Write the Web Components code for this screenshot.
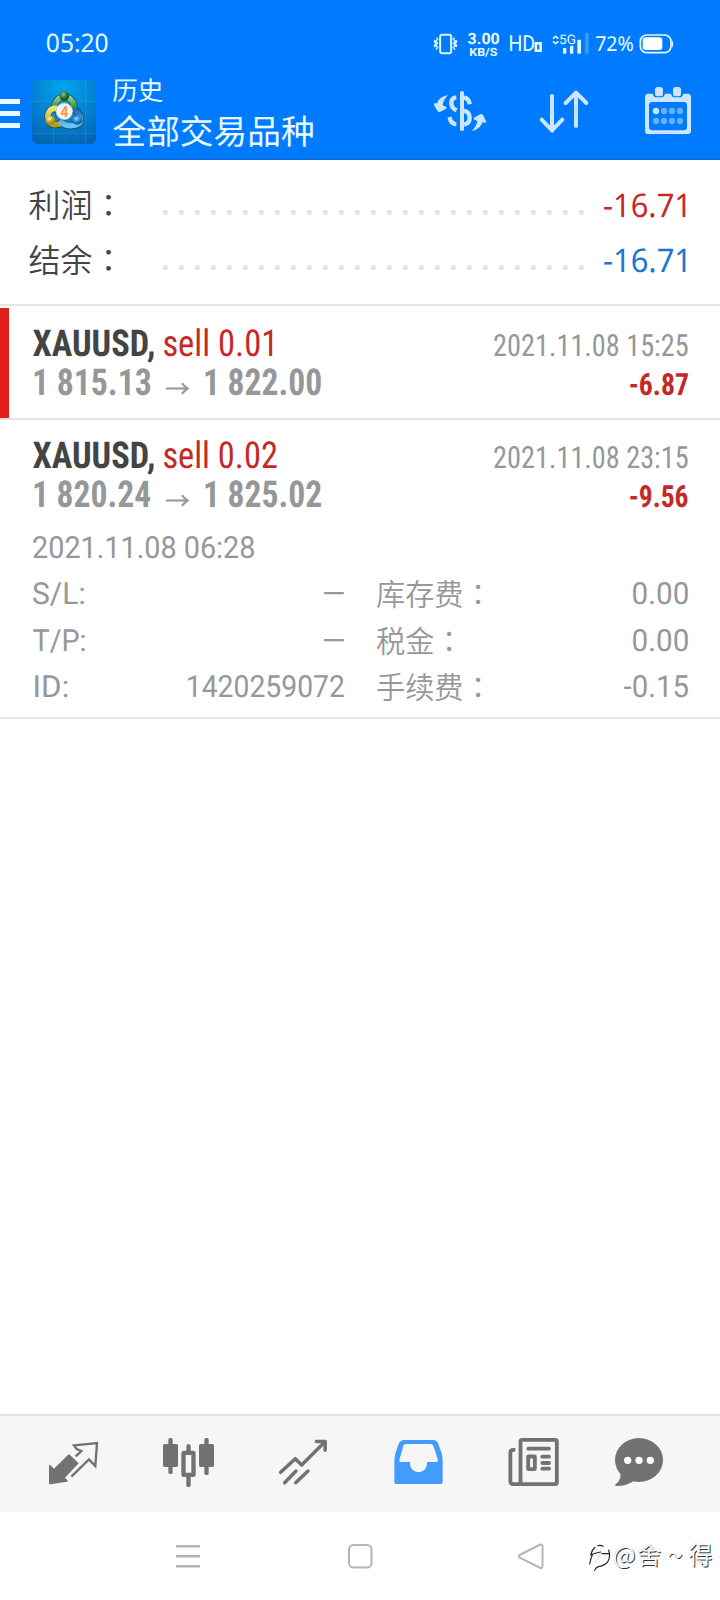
<!DOCTYPE html>
<html lang="zh-CN">
<head>
<meta charset="utf-8">
<title>历史</title>
<style>
html,body{margin:0;padding:0;background:#fff}
body{width:720px;height:1600px;overflow:hidden;font-family:Roboto,"Noto Sans CJK SC",sans-serif}
</style>
</head>
<body>
<history-app></history-app>
<script>
// Base class: renders the class's static markup into an open shadow root.
class Base extends HTMLElement{
  constructor(){super();this.attachShadow({mode:'open'});}
  connectedCallback(){const t=document.createElement('template');t.innerHTML=this.view();this.shadowRoot.replaceChildren(t.content.cloneNode(true));}
  attr(n,d=''){return this.getAttribute(n)??d;}
}

// One line of text whose inked width is exactly `w` pixels.
customElements.define('fit-text',class extends Base{
  view(){
    const f=this.attr('font','Roboto'),s=this.attr('size'),w=this.attr('w'),wt=this.attr('weight','400'),top=this.attr('top','0');
    return `<style>:host{display:block;flex:none;width:${w}px;height:${s}px;margin-top:${top}px;white-space:nowrap;font-size:0;line-height:0}
    span{display:block;width:max-content;text-rendering:geometricPrecision;transform-origin:0 0;font:${wt} ${s}px/${s}px ${this.stack(f)};${this.hasAttribute('cond')?'font-stretch:75%;':''}}</style><span><slot></slot></span>`;
  }
  stack(f){return `"${f}","Noto Sans CJK SC",sans-serif`;}
  connectedCallback(){
    super.connectedCallback();
    // Measured at ten times the size, so that the ink bounds are not rounded.
    const c=document.createElement('canvas').getContext('2d');
    c.font=`${this.attr('weight','400')} ${this.attr('size')*10}px ${this.stack(this.attr('font','Roboto'))}`;
    if(this.hasAttribute('cond'))c.fontStretch='condensed';
    const m=c.measureText(this.textContent),l=m.actualBoundingBoxLeft/10,k=this.attr('w')/(l+m.actualBoundingBoxRight/10);
    this.shadowRoot.querySelector('span').style.transform=`translate(${l*k}px,1px) scaleX(${k})`;
  }
});

customElements.define('status-bar',class extends Base{view(){return `<style>
:host{display:flex;align-items:flex-start;height:70px;color:#e9faff}
svg{display:block;flex:none}.time{margin-left:47px}.net{margin:0 0 0 9.500px;width:32px}
.net>:last-child{margin-left:2px}.hd{margin-left:10.500px}</style>
<fit-text class="time" w="60.500" size="25.500" font="Noto Sans" top="30">05:20</fit-text>
<svg style="margin:33px 0 0 325.500px" width="25" height="22" viewBox="99 39 75 66" fill="none" stroke="#dff6ff"><rect x="120.500" y="44" width="33" height="56" rx="6" stroke-width="6"/><path d="M110 53l3 5-6 6 6 6-6 6 6 6-5 7M105 60l-2 4 4 6-4 7 3 4M163 53l-3 5 6 6-6 6 6 6-6 6 5 7M168 60l2 4-4 6 4 7-3 4" stroke-width="4"/></svg>
<div class="net"><fit-text w="31" size="15.500" weight="700" top="31.300">3.00</fit-text><fit-text w="27" size="11.300" weight="700" top="-.800">KB/S</fit-text></div>
<fit-text class="hd" w="24" size="22" weight="400" top="33.200">HD</fit-text>
<svg width="9" height="12" viewBox="0 0 9 12" style="margin-top:41px"><rect x="1.800" y="2.300" width="4.800" height="7.400" fill="none" stroke="#e9faff" stroke-width="2.600"/></svg>
<svg width="7" height="12" viewBox="454 41 21 36" style="margin:34px 0 0 8.500px" fill="none" stroke="#dff6ff" stroke-width="5"><path d="M457 55l8-7 8 7M457 63l8 7 8-7"/></svg>
<div style="width:36px;margin-left:1px"><fit-text w="15" size="13.200" top="33.300">5G</fit-text>
<svg width="31" height="23" viewBox="490 57 93 69" style="margin:-8px 0 0 2.500px;transform:translateY(-7px)"><g fill="#e9faff"><rect x="493" y="108" width="10" height="17" rx="3"/><rect x="514" y="101" width="10" height="24" rx="3"/><rect x="536" y="83" width="11" height="42" rx="3"/></g><rect x="559" y="62" width="11" height="63" rx="3" fill="#3a99ff"/></svg></div>
<fit-text w="37" size="20.500" font="Noto Sans" top="32.500">72%</fit-text>
<svg width="35" height="20" viewBox="719 43 105 60" style="margin:34px 0 0 6px"><rect x="723" y="46" width="92" height="53" rx="19" fill="none" stroke="#e9faff" stroke-width="5"/><rect x="730" y="53" width="59" height="38" rx="9" fill="#fff"/><path d="M818 61q7 12 0 24z" fill="#e9faff"/></svg>`;}});

customElements.define('app-header',class extends Base{view(){return `<style>
:host{display:flex;align-items:flex-start;color:#e9faff;border-bottom:1.500px solid #0b67d2;box-sizing:border-box;height:90px}
svg{display:block;flex:none}.t{flex:1;margin-left:17px}.acts{display:flex;gap:44px;margin-right:22px}</style>
<svg width="20" height="89" viewBox="0 0 20 89" fill="#e9faff"><path d="M0 29h20v5H0zM0 41h20v5H0zM0 53h20v5H0z"/></svg>
<svg style="margin:10px 0 0 12px" width="64" height="64" viewBox="21 15 192 192">
<defs><radialGradient id="b" cx=".5" cy=".1" r=".95"><stop offset="0" stop-color="#02a6ec"/><stop offset=".5" stop-color="#0483d2"/><stop offset="1" stop-color="#0464b0"/></radialGradient>
<linearGradient id="g" x2="0" y2="1"><stop stop-color="#8fd08c"/><stop offset="1" stop-color="#1d7f33"/></linearGradient>
<linearGradient id="y" x2="0" y2="1"><stop stop-color="#e9e676"/><stop offset="1" stop-color="#b29c1c"/></linearGradient>
<linearGradient id="l" x2="0" y2="1"><stop stop-color="#1f70bd"/><stop offset="1" stop-color="#6cc5f5"/></linearGradient>
<radialGradient id="gb" cx=".4" cy=".3"><stop stop-color="#86c97c"/><stop offset="1" stop-color="#0d5c22"/></radialGradient>
<radialGradient id="yb" cx=".4" cy=".3"><stop stop-color="#fff49a"/><stop offset="1" stop-color="#a98d10"/></radialGradient>
<radialGradient id="lb" cx=".4" cy=".3"><stop stop-color="#8fd7fb"/><stop offset="1" stop-color="#176ab8"/></radialGradient></defs>
<rect x="21" y="15" width="192" height="192" rx="17" fill="url(#b)"/>
<path d="M86 15v192M182 15v192M21 79h192M21 175h192" stroke="#37b4e6" stroke-opacity=".5" stroke-width="2"/>
<path d="M54 15v192M118 15v192M150 15v192M21 47h192M21 111h192M21 143h192" stroke="#37b4e6" stroke-opacity=".16" stroke-width="2"/>
<g fill="none" stroke-linecap="round"><g stroke="#0d4a55" stroke-width="21"><path d="M94 106Q84 98 91 84Q101 66 118 66Q135 66 145 84Q150 96 142 106"/><path d="M101 148Q80 152 73 140Q63 124 74 108Q82 98 98 101"/><path d="M109 142Q122 153 138 152Q165 151 166 136Q167 119 153 107"/></g>
<path d="M94 106Q84 98 91 84Q101 66 118 66Q135 66 145 84Q150 96 142 106" stroke="url(#g)" stroke-width="17"/><path d="M101 148Q80 152 73 140Q63 124 74 108Q82 98 98 101" stroke="url(#y)" stroke-width="17"/><path d="M109 142Q122 153 138 152Q165 151 166 136Q167 119 153 107" stroke="url(#l)" stroke-width="17"/></g>
<ellipse cx="118" cy="64" rx="14" ry="15" fill="url(#gb)"/><ellipse cx="76" cy="136" rx="15" ry="14" fill="url(#yb)"/><ellipse cx="157" cy="136" rx="15" ry="13" fill="url(#lb)"/>
<circle cx="118" cy="109" r="25" fill="#f6f3ef" stroke="#b8b8aa" stroke-width="2"/><text x="118" y="125" text-anchor="middle" font-family="Roboto" font-weight="700" font-size="43" fill="#f09a55">4</text></svg>
<div class="t"><fit-text w="49.500" size="26" font="Noto Sans CJK SC" top="5.500">历史</fit-text><fit-text w="200" size="34" font="Noto Sans CJK SC" top="10.500">全部交易品种</fit-text></div>
<div class="acts">
<svg width="60" height="89" viewBox="90 0 180 267" fill="#cce6ff"><rect x="180" y="63" width="12" height="120" rx="5"/><g fill="none" stroke="#cce6ff" stroke-width="13"><path d="M169 82Q154 84 154 98Q154 114 170 121M149 141Q151 161 169 163M192 83Q207 85 209 103M192 122Q209 126 209 144Q209 160 192 164"/></g>
<path d="M144 75Q130 78 121 85Q112 93 112 100L102 100Q101 104 104 109L113 124Q116 128 121 125L139 116Q141 112 138 110L128 106Q128 92 144 75ZM216 183Q229 181 239 171Q247 162 247 157L258 158Q259 154 256 149L249 135Q246 131 241 133L222 143Q219 146 223 149L232 153Q230 168 216 183Z"/></svg>
<svg width="60" height="89" viewBox="402 0 180 267" fill="none" stroke="#cce6ff" stroke-width="12" stroke-linecap="round" stroke-linejoin="round"><path d="M456 78V182M425 149l31 32 31-32M528 168V68M497 99l31-31 31 31"/></svg>
<svg width="60" height="89" viewBox="714 0 180 267"><path fill="#cce6ff" fill-rule="evenodd" d="M745 71H758Q760 82 771 82H783Q793 82 795 71H813Q815 82 825 82H837Q848 82 850 71H863Q873 71 873 81V182Q873 192 863 192H745Q735 192 735 182V81Q735 71 745 71ZM757 96Q747 96 747 106V171Q747 181 757 181H851Q861 181 861 171V106Q861 96 851 96Z"/><rect x="765" y="51" width="24" height="28" rx="8" fill="#cce6ff"/><rect x="819" y="51" width="24" height="28" rx="8" fill="#cce6ff"/><g fill="#66afff"><circle cx="792" cy="123" r="9.500"/><circle cx="816" cy="123" r="9.500"/><circle cx="840" cy="123" r="9.500"/><circle cx="768" cy="153" r="9.500"/><circle cx="792" cy="153" r="9.500"/><circle cx="816" cy="153" r="9.500"/><circle cx="840" cy="153" r="9.500"/></g><circle cx="768" cy="123" r="9.500" fill="#cce6ff"/></svg></div>`;}});

// Label, dotted leader, value.
customElements.define('summary-row',class extends Base{view(){return `<style>
:host{display:flex;align-items:flex-start;height:55px;padding:0 32px 0 29px;box-sizing:border-box}
.l{width:134px;color:#444;font:350 32px/32px "Noto Sans CJK SC",sans-serif;padding-top:10px;margin-left:-.500px;margin-right:.500px;white-space:nowrap}.l i{font-style:normal;font-family:"Noto Sans CJK TC"}
.d{width:421px;height:5px;margin-top:33px;background:radial-gradient(circle at 2.500px 2.500px,#e3e3e3 2.200px,transparent 2.900px) 0 0/16px 5px}
.v{margin-left:19.500px;color:var(--c)}</style><div class="l">${this.attr('label')}<i lang="zh-TW">：</i></div><div class="d"></div><fit-text class="v" w="81.500" size="32.600" font="Noto Sans" weight="400" top="10.500">${this.attr('value')}</fit-text>`;}});

customElements.define('deal-row',class extends Base{view(){const a=n=>this.attr(n);return `<style>
:host{display:block;box-sizing:border-box;border-bottom:2px solid #e4e4e4;padding:0 32.500px 0 33px;box-shadow:inset 9px 0 var(--mark,transparent);color:#96979b}
.r{display:flex;justify-content:space-between;align-items:flex-start}.l{display:flex}.s{color:#444}.k{color:#c62828;margin-left:10px}</style>
<div class="r" style="height:56px"><div class="l"><fit-text class="s" cond w="120.500" size="37" weight="700" top="17">XAUUSD,</fit-text><fit-text class="k" cond w="${a('kw')}" size="37" top="17">${a('kind')}</fit-text></div><fit-text cond w="193.500" size="30.500" top="22.800">${a('time')}</fit-text></div>
<div class="r" style="height:54px"><div class="l" style="margin-left:1px"><fit-text cond w="116.500" size="37" weight="700">${a('open')}</fit-text><fit-text style="margin-left:15.500px" w="23.500" size="25" weight="500" font="Noto Sans CJK SC" top="10.500">→</fit-text><fit-text style="margin-left:15px" cond w="116" size="37" weight="700">${a('close')}</fit-text></div><fit-text cond style="color:#c62828" w="58" size="30.500" weight="700" top="6">${a('profit')}</fit-text></div><slot></slot>`;}});

customElements.define('deal-details',class extends Base{view(){
const row=(l,lw,v,vw,l2,v2,v2w,dx=0)=>`<div class="r"><fit-text style="margin-left:${dx}px" w="${lw}" size="30.500">${l}</fit-text><fit-text w="${vw}" size="30.500">${v}</fit-text><div class="c">${l2}<i lang="zh-TW">：</i></div><fit-text w="${v2w}" size="30.500">${v2}</fit-text></div>`;
return `<style>:host{display:block;height:184px}
.r{display:grid;grid-template-columns:153.500px 157px 1fr auto;height:46.500px;align-items:start}.r>:nth-child(2){justify-self:end}
.c{margin-top:-2px;padding-left:32.500px;font:350 29.200px/30px "Noto Sans CJK SC",sans-serif;white-space:nowrap}.c i{font-style:normal;font-family:"Noto Sans CJK TC"}</style>
<fit-text w="221" size="30.500" top="2.700">2021.11.08 06:28</fit-text><div style="height:16px"></div>
${row('S/L:',51,'–',20,'库存费','0.00',55)}${row('T/P:',52,'–',20,'税金','0.00',55)}${row('ID:',32.5,'1420259072',156,'手续费','-0.15',64,1.7)}`;}});

customElements.define('tab-bar',class extends Base{view(){
const s=(x,b)=>`<svg width="60" height="96" viewBox="${x} 33 180 288" fill="#727272" stroke-linecap="round" stroke-linejoin="round">${b}</svg>`;
return `<style>:host{display:grid;grid-template-columns:repeat(5,115px) 96px;padding-left:15.500px;justify-items:center;height:96px;background:#f6f6f6;border-top:2px solid #e3e3e3}svg{display:block}</style>`+
s(129,'<path d="M207 147L236 175L195 218L204 228Q203 230 200 230L153 238Q147 239 147 233V181Q150 178 153 182L162 191Z"/><path d="M227 154L244 138L230 132L222 121L291 114L286 183L267 163L214 215" fill="none" stroke="#727272" stroke-width="7" stroke-linecap="butt" stroke-linejoin="miter"/>')+
s(474,'<rect x="489" y="117" width="45" height="69" rx="5"/><rect x="505" y="99" width="13" height="108" rx="5"/><rect x="597" y="117" width="45" height="69" rx="5"/><rect x="613" y="99" width="13" height="111" rx="5"/><rect x="559" y="118" width="13" height="30" rx="5"/><rect x="559" y="205" width="13" height="41" rx="5"/><rect x="550.500" y="143.500" width="30" height="66" rx="1" fill="none" stroke="#727272" stroke-width="13"/>')+
s(819,'<g fill="none" stroke="#727272" stroke-width="10.500"><path d="M842 202L886 161L905 180L975 110M854 233L888 198M887 233L924 198"/><path d="M949 109.500H975.500V136"/></g>')+
s(84,'<path fill="#429bff" fill-rule="evenodd" d="M131 105H219Q229 105 234 114L244 142Q248 155 248 170V230Q248 237 240 237H111Q103 237 103 230V170Q103 155 107 142L117 114Q122 105 131 105ZM137 117Q132 117 130 122L118 165Q117 170 121 171H150V176A25.500 25.500 0 0 0 201 176V171H230Q234 171 234 165L220 122Q217 117 212 117Z"/>')+
s(429,'<g fill="none" stroke="#727272" stroke-width="11.500"><rect x="481.500" y="104.500" width="109" height="133" rx="5"/><path d="M466 134.500H460Q451 134.500 451 144V228Q451 237.500 460 237.500H482" stroke-linecap="butt"/><path d="M505 131H567M547 155H567M547 174H567M547 191H567"/><rect x="504.500" y="154.500" width="20" height="38" rx="1"/></g>')+
s(747,'<ellipse cx="837" cy="165" rx="72" ry="66"/><path d="M781 205Q785 224 766 239Q763 243 770 243Q801 243 821 228Z"/><g fill="#fff"><circle cx="803" cy="166" r="11"/><circle cx="837" cy="166" r="11"/><circle cx="871" cy="166" r="11"/></g>');}});

customElements.define('nav-bar',class extends Base{view(){return `<style>:host{display:flex;height:88px;align-items:flex-start;position:relative;padding-left:174px}svg{display:block;flex:none;margin-top:30px}
.w{position:absolute;left:588px;top:28px;display:flex;color:#fff;font:350 24px/28px "Noto Sans CJK SC",sans-serif;text-shadow:1px 1px 0 #333,0 0 1px #bbb}
.w svg{margin:2px 0 0;overflow:visible}.w span{white-space:nowrap;letter-spacing:1.600px}.w i{font-style:normal;display:inline-block;transform:scaleX(.6)}</style>
<svg width="28" height="28" viewBox="0 0 28 28" stroke="#b5b5b5" stroke-width="2.400"><path d="M2 4.300h24M2 14.300h24M2 24.300h24"/></svg>
<svg style="margin-left:144px" width="28" height="28" viewBox="0 0 28 28" fill="none" stroke="#b5b5b5" stroke-width="2"><rect x="3" y="3" width="22.500" height="22.500" rx="4.500"/></svg>
<svg style="margin-left:142px" width="28" height="28" viewBox="0 0 28 28" fill="none" stroke="#b5b5b5" stroke-width="2" stroke-linejoin="round"><path d="M24.500 2.500Q26.500 2 26.500 4.500V24Q26.500 26.500 24.500 26L3.700 15.700Q2 14.300 3.700 13Z"/></svg>
<div class="w"><svg width="25" height="28" viewBox="684 412 75 84" fill="none" stroke="#222" stroke-width="3.500" stroke-linecap="round"><path d="M705 428Q697 434 693 448M697 450Q692 462 689 478M691 451Q706 445 722 442M714 423Q722 420 729 425M726 447H748M746 436Q753 456 743 472Q732 484 715 486Q707 489 704 497"/><path d="M705 474Q713 464 721 447" stroke="#bbb" stroke-width="2"/></svg><span>@舍<i>～</i>得</span></div>`;}});

customElements.define('history-app',class extends Base{view(){return `<style>:host{display:flex;flex-direction:column;width:720px;height:1600px}
header{background:#007aff;height:160px}.sum{height:146px;padding-top:17px;box-sizing:border-box;border-bottom:2px solid #e4e4e4;margin-bottom:2px}main{flex:1}</style>
<header><status-bar></status-bar><app-header></app-header></header>
<main><div class="sum"><summary-row label="利润" value="-16.71" style="--c:#c62828"></summary-row><summary-row label="结余" value="-16.71" style="--c:#1976d2"></summary-row></div>
<deal-row style="--mark:#e11d1d" kind="sell 0.01" kw="108.500" time="2021.11.08 15:25" open="1 815.13" close="1 822.00" profit="-6.87"></deal-row>
<deal-row kind="sell 0.02" kw="113" time="2021.11.08 23:15" open="1 820.24" close="1 825.02" profit="-9.56"><deal-details></deal-details></deal-row></main>
<tab-bar></tab-bar><nav-bar></nav-bar>`;}});
</script>
</body>
</html>
